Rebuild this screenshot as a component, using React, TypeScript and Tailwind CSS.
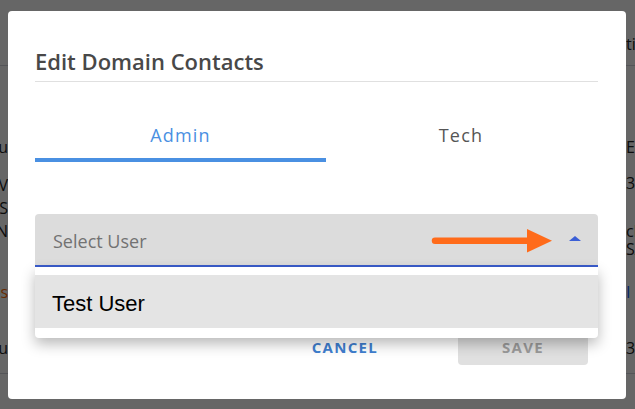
import React from "react";

const ui = { fontFamily: '"Open Sans", "Liberation Sans", sans-serif' };
const arial = { fontFamily: '"Liberation Sans", Arial, sans-serif' };

type Row = { h: string; left: React.ReactNode; right: React.ReactNode };

const rows: Row[] = [
  { h: "h-[66px] items-end pb-[10px] border-b border-gray-300", left: "", right: "tions" },
  { h: "h-[62px]", left: "", right: "" },
  { h: "h-[38px] items-center", left: "Statu", right: "EFT" },
  {
    h: "h-[96px] items-start pt-[8px]",
    left: (
      <div className="flex flex-col items-end leading-[23px]">
        <span>NOV</span>
        <span>USS</span>
        <span>ANN</span>
      </div>
    ),
    right: (
      <div className="flex flex-col leading-[18px]">
        <span>334</span>
        <span className="mt-[30px]">check</span>
        <span>SAVE</span>
      </div>
    ),
  },
  {
    h: "h-[60px] items-center",
    left: (
      <span>
        10 <span className="text-orange-500">s</span>
      </span>
    ),
    right: <span className="text-blue-600">I</span>,
  },
  { h: "h-[52px] items-center border-b border-gray-300", left: "Statu", right: "3yr" },
];

function Background() {
  return (
    <div className="flex flex-col text-[16px] leading-[22px] text-[#222]">
      {rows.map((r, i) => (
        <div key={i} className={`flex justify-between ${r.h}`}>
          <div className="w-[8px] overflow-hidden flex justify-end whitespace-nowrap">{r.left}</div>
          <div className="w-[9px] overflow-hidden whitespace-nowrap">{r.right}</div>
        </div>
      ))}
    </div>
  );
}

function Arrow() {
  return (
    <svg className="absolute left-[395px] top-[14px]" width="125" height="26" viewBox="0 0 125 26">
      <line x1="5" y1="12.7" x2="100" y2="12.7" stroke="#ff6b1a" strokeWidth="6.5" strokeLinecap="round" />
      <polygon points="97,1 122,12.7 97,24.4" fill="#ff6b1a" />
    </svg>
  );
}

function SelectUser() {
  return (
    <div className="relative">
      <div className="relative flex h-[53px] items-center justify-between rounded-t-[4px] border-b-2 border-[#3a5ccc] bg-[#dcdcdc] pl-[18px] pr-[17px]">
        <span className="mt-[3px] text-[18px] text-[#727272]">Select User</span>
        <Arrow />
        <svg width="12" height="6" viewBox="0 0 12 6" className="mb-[2px]">
          <polygon points="0,5 6,0 12,5" fill="#3b5fd6" />
        </svg>
      </div>
      <div className="absolute left-0 right-0 top-[53px] z-10 rounded-b-[4px] bg-white pt-[8px] pb-[10px] shadow-[0_6px_14px_rgba(0,0,0,0.28)]">
        <div className="flex h-[53px] items-center bg-[#e4e4e4] pl-[17px] pt-[3px] text-[22px] text-black" style={arial}>
          Test User
        </div>
      </div>
    </div>
  );
}

export default function App() {
  return (
    <div className="relative h-[409px] w-[635px] overflow-hidden bg-white" style={ui}>
      <Background />
      <div className="absolute inset-0 bg-black/60 pl-[8px] pt-[11px]">
        <div className="flex h-[388px] w-[618px] flex-col rounded-[4px] bg-white pl-[27px] pr-[28px] pt-[34px]">
          <div className="border-b border-[#e0e0e0] pb-[4px] text-[22px] font-semibold leading-[32px] text-[#484848]">
            Edit Domain Contacts
          </div>

          <div className="mt-[41px] grid grid-cols-[291px_1fr] pr-[2px]">
            <div className="flex flex-col items-center">
              <span className="text-[18px] font-medium leading-[24px] tracking-[1.2px] text-[#4a90e2]">Admin</span>
              <div className="mt-[11px] h-[4px] w-full bg-[#4a90e2]" />
            </div>
            <div className="flex flex-col items-center">
              <span className="text-[18px] leading-[24px] tracking-[1.2px] text-[#555]">Tech</span>
              <div className="mt-[11px] h-[4px] w-full" />
            </div>
          </div>

          <div className="mt-[52px]">
            <SelectUser />
          </div>

          <div className="mt-[62px] flex items-center justify-end pr-[10px]">
            <button className="mr-[64px] px-[16px] text-[15px] font-bold tracking-[1.3px] text-[#3f7fd0]">CANCEL</button>
            <button className="h-[36px] w-[130px] rounded-[4px] bg-[#e0e0e0] text-[15px] font-bold tracking-[1.3px] text-[#9a9a9a]">
              SAVE
            </button>
          </div>
        </div>
      </div>
    </div>
  );
}
